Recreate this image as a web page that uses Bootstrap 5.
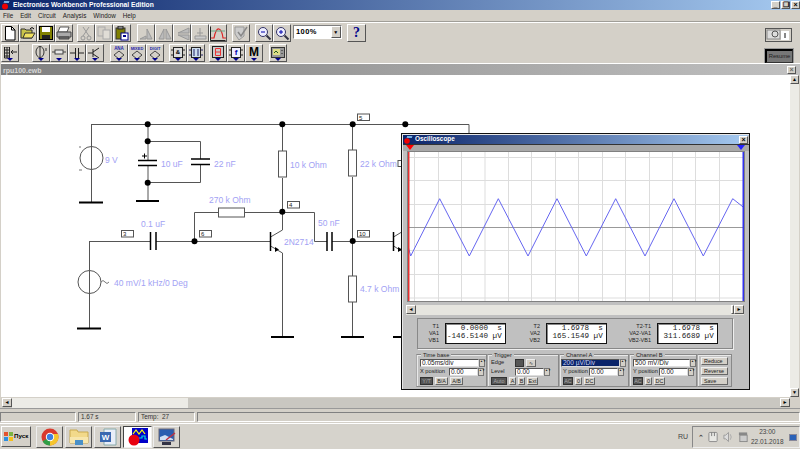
<!DOCTYPE html>
<html lang="ru">
<head>
  <meta charset="UTF-8" />
  <title>Electronics Workbench Professional Edition</title>
  <link rel="stylesheet" href="https://cdn.jsdelivr.net/npm/bootstrap@5.3.0/dist/css/bootstrap.min.css"/>
  <style>
    html, body { margin: 0; width: 800px; height: 449px; overflow: hidden; }
    body { background: #d4d0c8; color: #000; font: 8px/1 "Liberation Sans", Arial, sans-serif; }
    svg { display: block; }
    .app { width: 800px; height: 449px; }
    .bevel { background: #d4d0c8; border: 1px solid; border-color: #fff #555 #555 #fff; }
    .sunk { border: 1px solid; border-color: #808080 #fff #fff #808080; }

    .wintitle { height: 10px; flex: none; padding-left: 1px; color: #fff; font-size: 6.7px; font-weight: 700; background: linear-gradient(to right, #0a246a, #a6caf0); }
    .wintitle span { margin-left: 1px; }
    .winbtn { width: 9px; height: 8px; margin-left: 1px; font-size: 7px; line-height: 6px; text-align: center; color: #000; }
    .menubar { height: 12px; flex: none; padding: 1px 0 0 3px; gap: 7px; border-bottom: 1px solid #a09e98; box-shadow: 0 1px 0 #fff; font-size: 6.3px; color: #222; }
    .toolzone { height: 41px; flex: none; padding-top: 1px; }
    .tools { gap: 2px; padding-top: 1px; }
    .tb { height: 18px; padding-left: 1px; }
    .ic { width: 18px; height: 18px; flex: none; position: relative; display: flex; align-items: center; justify-content: center; }
    .ic.drop::after { content: ""; position: absolute; left: 5px; bottom: 0; border: 3px solid transparent; border-top: 3px solid #00008a; border-bottom: 0; }
    .sp2 { margin-left: 2px; } .sp4 { margin-left: 4px; } .sp5 { margin-left: 5px; } .sp6 { margin-left: 6px; } .sp13 { margin-left: 13px; }
    .zoomsel { width: 49px; height: 14px; margin-top: 1px; background: #fff; font-size: 7.5px; font-weight: 700; letter-spacing: .4px; padding-left: 2px; }
    .zoomsel b { margin-left: auto; width: 10px; height: 12px; display: flex; align-items: center; justify-content: center; font-size: 5px; }
    .help { width: 19px; color: #00008a; font: 700 14px "Liberation Serif", serif; }
    .memo { font-size: 12px; font-weight: 700; padding-bottom: 3px; }
    .simside { width: 35px; padding-top: 5px; gap: 7px; flex: none; }
    .sim1 { height: 14px; width: 27px; border: 1px solid #555; background: #d4d0c8; }
    .sim2 { height: 14px; width: 28px; border: 1px solid #333; outline: 1px solid #999; background: #777; font-size: 5.8px; color: #222; border-left: 2px solid #000; border-top: 2px solid #000; }

    .doc { flex: 1 1 auto; min-height: 0; margin: 0 0 0 1px; }
    .doctitle { height: 12px; flex: none; padding: 1px 4px 0 2px; color: #d8d8d8; font-size: 7px; font-weight: 700; background: linear-gradient(to right, #808080, #c0c0c0); border-top: 1px solid #fff; }
    .docclose { color: #666; }
    .docbody { flex: 1 1 auto; min-height: 0; }
    .canvas { background: #fff; width: 789px; height: 322px; flex: none; }
    .vscroll { width: 9px; background: #ecebe6; }
    .sbtn { width: 9px; height: 9px; flex: none; font-size: 5px; line-height: 7px; text-align: center; }
    .hscroll { height: 10px; width: 788px; margin-left: 1px; margin-top: 1px; flex: none; background: #c9c7c1; }
    .hthumb { width: 176px; background: #ecebe6; }
    .sbl { width: 10px; height: 9px; flex: none; font-size: 5px; line-height: 7px; text-align: center; }

    .statusbar { height: 15px; flex: none; padding: 3px 0 0 0; border-top: 1px solid #999; gap: 2px; font-size: 6.4px; color: #333; }
    .statusbar div { height: 10px; padding: 1px 0 0 2px; }
    .st1 { width: 76px; } .st2 { width: 58px; } .st3 { width: 57px; }
    .taskbar { height: 26px; flex: none; background: #d6d3cc; border-top: 1px solid #fff; }
    .startbtn { width: 30px; height: 21px; margin: 2px 0 0 1px; font-size: 6.2px; font-weight: 700; gap: 1px; padding-left: 2px; }
    .appbtn { width: 27px; height: 22px; margin-top: 2px; margin-left: 2px; border: 1px solid; border-color: #eee #555 #555 #eee; display: flex; align-items: center; justify-content: center; }
    .appbtn.first { margin-left: 5px; }
    .appbtn.last { margin-left: 1px; }
    .appbtn.on { width: 29px; background: #fff; border-color: #444 #eee #eee #444; }
    .tray { width: 108px; height: 22px; margin-top: 2px; border: 1px solid; border-color: #888 #eee #eee #888; color: #444; }
    .lang { margin: 0 4px 0 auto; font-size: 7px; color: #444; align-self: center; }
    .chev { margin: 0 4px 0 5px; font-size: 7px; font-weight: 700; }
    .clock { font-size: 6.5px; line-height: 10px; text-align: center; width: 40px; margin-left: auto; }
    .showdesk { width: 9px; height: 7px; background: #2a62b8; margin: 0 2px 0 3px; border: 1px solid #889; }

    .scope { position: absolute; left: 401px; top: 133px; width: 349px; height: 257px; background: #c0c0c0; border: 1px solid #111; box-shadow: inset 1px 1px 0 #e8e8e8; padding: 1px 0 0 1px; z-index: 5; }
    .scopetitle { height: 9px; margin-right: 1px; color: #fff; font-size: 6.4px; font-weight: 700; background: linear-gradient(to right, #0a246a, #a6caf0); padding-left: 1px; gap: 1px; }
    .scopetitle .winbtn { margin-left: auto; }
    .markers { height: 7px; padding: 0 4px 0 3px; background: #a8a8a8; border-top: 1px solid #333; }
    .plot { margin-left: 4px; width: 338px; height: 151px; background: #fff; border: 1px solid #808080; }
    .hbar { margin: 3px 5px 0 3px; height: 10px; background: #e6e5df; }
    .hbar .sbtn { height: 9px; width: 10px; }
    .hbar .thumb { width: 3px; margin-left: auto; height: 9px; }
    .readouts { width: 316px; height: 31px; margin: 3px 0 0 14px; display: grid; grid-template-columns: 27px 61px 40px 61px 50px 61px; align-items: center; border: 1px solid #888; box-shadow: 1px 1px 0 #eee; font-size: 5.5px; }
    .rlab { text-align: right; padding-right: 6px; line-height: 7px; color: #222; }
    .rval { height: 21px; background: #fff; border: 1px solid #111; box-shadow: inset 1px 1px 0 #888; font: 7.6px/7.5px "Liberation Mono", monospace; white-space: pre; padding: 1px 0 0 1px; color: #222; }
    .panels { margin: 5px 0 0 13px; width: 316px; height: 33px; font-size: 5.7px; color: #222; }
    .grp { position: relative; border: 1px solid #888; border-left-color: #aaa; box-shadow: inset 1px 1px 0 #e8e8e8; padding: 4px 0 0 3px; gap: 1px; flex: none; }
    .grp > em { position: absolute; left: 4px; top: -3px; padding: 0 2px; background: #c0c0c0; font-style: normal; line-height: 7px; }
    .g71 { width: 71px; } .g72 { width: 72px; } .g70 { width: 70px; } .g68 { width: 68px; }
    .gside { width: 35px; gap: 2px; padding-top: 2px; }
    .cr { height: 8px; gap: 2px; white-space: nowrap; }
    .fld { height: 8px; background: #fff; border: 1px solid; border-color: #555 #ddd #ddd #555; padding-left: 1px; line-height: 6px; font-size: 6.5px; }
    .fld.sel { background: #0a246a; color: #c8d0f0; margin-left: -2px; }
    .f59 { width: 59px; } .f58 { width: 58px; } .f29 { width: 29px; }
    .spin { width: 6px; height: 8px; background: #d4d0c8; border: 1px solid #777; margin-left: -2px; font-size: 3px; line-height: 3px; text-align: center; }
    .lb22 { width: 22px; } .lb26 { width: 24px; } .lb27 { width: 25px; margin-right: 2px; }
    .mb { height: 8px; padding: 0; min-width: 7px; background: #d4d0c8; border: 1px solid; border-color: #eee #666 #666 #eee; line-height: 6px; font-size: 5.4px; text-align: center; }
    .mb.dn { background: #555; color: #aaa; border-color: #333; }
    .m13 { width: 13px; } .m16 { width: 16px; } .m11 { width: 11px; } .m9 { width: 9px; } .m10 { width: 10px; }
    .sidebtn { width: 27px; height: 8px; font-size: 5.4px; line-height: 6px; padding-left: 2px; border: 1px solid; border-color: #eee #666 #666 #eee; background: #d4d0c8; }
  </style>
</head>
<body>
<div class="app d-flex flex-column position-relative">

  <div class="wintitle d-flex align-items-center">
    <svg width="11" height="10" viewBox="0 0 11 10"><path d="M3 3l1-2 1 2 1-2 1 2 1-2" fill="none" stroke="#8cf" stroke-width="1"/><circle cx="4" cy="6.5" r="3" fill="#e00"/></svg>
    <span>Electronics Workbench Professional Edition</span>
    <div class="winbtn bevel ms-auto">_</div><div class="winbtn bevel">❐</div><div class="winbtn bevel">×</div>
  </div>

  <div class="menubar d-flex align-items-center">
    <span>File</span><span>Edit</span><span>Circuit</span><span>Analysis</span><span>Window</span><span>Help</span>
  </div>

  <div class="toolzone d-flex">
    <div class="tools flex-grow-1 d-flex flex-column">
      <div class="tb d-flex">
        <div class="ic bevel"><svg width="14" height="15" viewBox="0 0 14 15"><path d="M2.500 .5h6l3.500 3.500v10h-9.500z" fill="#fff" stroke="#000"/><path d="M8.500 .5v3.500h3.500" fill="none" stroke="#000"/></svg></div>
        <div class="ic bevel"><svg width="16" height="14" viewBox="0 0 16 14"><path d="M1 3h4l1 1h6v8h-11z" fill="#c9c34a" stroke="#333"/><path d="M3 12l2-5h10l-3 5z" fill="#f0e060" stroke="#333"/><path d="M10 3q2-3 4 0" fill="none" stroke="#000"/></svg></div>
        <div class="ic bevel"><svg width="14" height="14" viewBox="0 0 14 14"><rect x=".5" y=".5" width="13" height="13" fill="#808000" stroke="#000"/><rect x="3" y="1" width="8" height="5" fill="#fff"/><rect x="3" y="9" width="8" height="4" fill="#222"/></svg></div>
        <div class="ic bevel"><svg width="16" height="14" viewBox="0 0 16 14"><path d="M4 1h9l-2 5h-9z" fill="#fff" stroke="#555"/><path d="M1 6h14v5h-14z" fill="#aaa" stroke="#444"/><path d="M3 11h10v2h-10z" fill="#777" stroke="#444"/></svg></div>
        <div class="ic bevel sp4"><svg width="12" height="15" viewBox="0 0 12 15"><path d="M3 1l6 9M9 1l-6 9" stroke="#999" fill="none"/><circle cx="3" cy="12" r="2" fill="none" stroke="#999"/><circle cx="9" cy="12" r="2" fill="none" stroke="#999"/></svg></div>
        <div class="ic bevel"><svg width="14" height="14" viewBox="0 0 14 14"><rect x="1" y="1" width="7" height="9" fill="#d4d0c8" stroke="#aaa"/><rect x="6" y="4" width="7" height="9" fill="#e0ddd6" stroke="#aaa"/></svg></div>
        <div class="ic bevel"><svg width="14" height="15" viewBox="0 0 14 15"><rect x="1" y="2" width="9" height="11" fill="#808000" stroke="#333"/><rect x="3" y="0" width="5" height="3" fill="#888" stroke="#222"/><rect x="6" y="7" width="7" height="7" fill="#fff" stroke="#00008a"/><rect x="8" y="9" width="3" height="2" fill="#00008a"/></svg></div>
        <div class="ic bevel sp6"><svg width="15" height="13" viewBox="0 0 15 13"><path d="M1 12l6-3v3zM8 12v-10l5 10z" fill="#bbb" stroke="#999"/></svg></div>
        <div class="ic bevel"><svg width="15" height="13" viewBox="0 0 15 13"><path d="M7 12v-10l-5 10zM9 12v-10l5 10z" fill="#bbb" stroke="#999"/></svg></div>
        <div class="ic bevel"><svg width="15" height="13" viewBox="0 0 15 13"><path d="M14 1v5l-11 0zM14 8v5l-11-5z" fill="#bbb" stroke="#999"/></svg></div>
        <div class="ic bevel"><svg width="15" height="13" viewBox="0 0 15 13"><path d="M2 9h11v3h-11zM7 1v8M4 6h6" fill="#ccc" stroke="#999"/></svg></div>
        <div class="ic bevel"><svg width="16" height="15" viewBox="0 0 16 15"><path d="M.5 .5v14h15" fill="none" stroke="#222"/><path d="M1 12h3q2-10 5-9t4 9h3" fill="none" stroke="#d22" stroke-width="1.200"/><path d="M1 5h14" stroke="#6a8"/></svg></div>
        <div class="ic bevel sp5"><svg width="15" height="15" viewBox="0 0 15 15"><path d="M1 1h9v9l-5 4-4-6z" fill="#ccc" stroke="#999"/><path d="M4 6l3 4 6-9" fill="none" stroke="#888" stroke-width="1.500"/></svg></div>
        <div class="ic bevel sp5"><svg width="15" height="15" viewBox="0 0 15 15"><circle cx="6" cy="6" r="4.500" fill="#eef" stroke="#336"/><path d="M4 6h4" stroke="#00a"/><path d="M9.500 9.500l4 4" stroke="#334" stroke-width="2"/></svg></div>
        <div class="ic bevel"><svg width="15" height="15" viewBox="0 0 15 15"><circle cx="6" cy="6" r="4.500" fill="#eef" stroke="#336"/><path d="M4 6h4M6 4v4" stroke="#00a"/><path d="M9.500 9.500l4 4" stroke="#334" stroke-width="2"/></svg></div>
        <div class="zoomsel sunk sp2 d-flex align-items-center">100%<b class="bevel">▼</b></div>
        <div class="ic bevel sp5 help">?</div>
      </div>
      <div class="tb d-flex">
        <div class="ic bevel drop"><svg width="15" height="13" viewBox="0 0 15 13"><path d="M1.500 0v11h5v-11zM1.500 3h5M1.500 6h5M1.500 9h5M4 0v11" fill="none" stroke="#222"/><path d="M14 5h-6M10 3l-2 2 2 2" fill="none" stroke="#222"/></svg></div>
        <div class="ic bevel drop sp13"><svg width="14" height="14" viewBox="0 0 14 14"><ellipse cx="6" cy="6" rx="4" ry="5.500" fill="none" stroke="#333"/><path d="M6 0v13M12 2v1M11 4h2" stroke="#333"/></svg></div>
        <div class="ic bevel drop"><svg width="14" height="12" viewBox="0 0 14 12"><rect x="3" y="3" width="8" height="4" fill="#e8e8e8" stroke="#444"/><path d="M0 5h3M11 5h3" stroke="#444"/></svg></div>
        <div class="ic bevel drop"><svg width="14" height="12" viewBox="0 0 14 12"><path d="M0 6h5M9 6h5M5.500 1v10M8.500 1v10" stroke="#222"/></svg></div>
        <div class="ic bevel drop"><svg width="14" height="12" viewBox="0 0 14 12"><path d="M5 2v8M0 6h5M5 5l6-4M5 7l6 4" stroke="#222" fill="none"/></svg></div>
        <div class="ic bevel drop sp6"><svg width="16" height="15" viewBox="0 0 16 15"><path d="M8 5l5 4-5 4-5-4z" fill="none" stroke="#444"/><text x="8" y="4" text-anchor="middle" font-size="4.500" font-weight="700" fill="#22a">ANA</text></svg></div>
        <div class="ic bevel drop"><svg width="16" height="15" viewBox="0 0 16 15"><path d="M8 5l5 4-5 4-5-4z" fill="none" stroke="#444"/><text x="8" y="4" text-anchor="middle" font-size="4" font-weight="700" fill="#22a">MIXED</text></svg></div>
        <div class="ic bevel drop"><svg width="16" height="15" viewBox="0 0 16 15"><path d="M8 5l5 4-5 4-5-4z" fill="none" stroke="#444"/><text x="8" y="4" text-anchor="middle" font-size="4" font-weight="700" fill="#22a">DIGIT</text></svg></div>
        <div class="ic bevel drop sp5"><svg width="14" height="13" viewBox="0 0 14 13"><rect x="2.500" y=".5" width="9" height="10" fill="#ddd" stroke="#222"/><path d="M0 3h2M0 8h2M12 3h2M12 8h2" stroke="#222"/><text x="7" y="7" text-anchor="middle" font-size="6" font-weight="700">&amp;</text></svg></div>
        <div class="ic bevel drop"><svg width="14" height="13" viewBox="0 0 14 13"><rect x="2.500" y=".5" width="9" height="10" fill="#cde" stroke="#222"/><path d="M0 3h2M0 8h2M12 3h2M12 8h2M5 2v7M9 2v7" stroke="#226"/></svg></div>
        <div class="ic bevel drop sp4"><svg width="12" height="14" viewBox="0 0 12 14"><rect x=".5" y=".5" width="11" height="11" fill="#ccc" stroke="#222"/><path d="M3.500 2.500h5v7h-5zM3.500 6h5" fill="none" stroke="#e33"/></svg></div>
        <div class="ic bevel drop"><svg width="14" height="13" viewBox="0 0 14 13"><rect x="2.500" y=".5" width="9" height="10" fill="#eef" stroke="#222"/><path d="M0 3h2M0 8h2M12 3h2M12 8h2" stroke="#222"/><text x="7" y="8" text-anchor="middle" font-size="8" font-weight="700" fill="#00a">f</text></svg></div>
        <div class="ic bevel drop memo">M</div>
        <div class="ic bevel drop sp6"><svg width="14" height="12" viewBox="0 0 14 12"><rect x=".5" y=".5" width="13" height="10" fill="#999" stroke="#333"/><rect x="2" y="2" width="7" height="6" fill="#dd8"/><path d="M3 6l2-2 2 2" stroke="#252" fill="none"/><path d="M11 3v1M11 6v1" stroke="#222"/></svg></div>
      </div>
    </div>
    <div class="simside d-flex flex-column align-items-start">
      <div class="sim1 d-flex align-items-center"><svg width="25" height="12" viewBox="0 0 25 12"><rect x="1" y="1" width="13" height="9" fill="#ddd" stroke="#888"/><circle cx="9" cy="5" r="3" fill="none" stroke="#555"/><rect x="15" y="2" width="8" height="9" fill="#fff"/><path d="M19 4v5" stroke="#111"/></svg></div>
      <div class="sim2 d-flex align-items-center justify-content-center">Resume</div>
    </div>
  </div>

  <div class="doc d-flex flex-column">
    <div class="doctitle d-flex align-items-center">rpu100.ewb<div class="winbtn bevel docclose ms-auto">×</div></div>
    <div class="docbody d-flex">
      <div class="canvas">
        <svg width="789" height="322" viewBox="0 76 789 322" font-family="Liberation Sans, Arial, sans-serif" font-size="8.500">
          <g fill="none" stroke="#555">
            <path d="M90 125.500H468V134M90.500 125V203M147 125V161M147 167V202M147 142.500H199.500V160M199.500 165V183.500H147"/>
            <circle cx="90.500" cy="159" r="11.500"/>
            <path d="M88.500 242.500H149M155 242.500H269.500M88.500 242V329M193.500 242V213.500H217M244 213.500H313.500V242.500H326M331 242.500H392"/>
            <circle cx="88.500" cy="283" r="11.500"/>
            <path d="M281.500 125V152M281.500 179V231L269.500 238M269.500 247L281.500 254V338M351.500 125V151M351.500 178V277M351.500 303V338M392.500 238L404 231M392.500 247L404 254"/>
            <rect x="217.500" y="209" width="26" height="9" fill="#fff"/>
            <rect x="277.500" y="152" width="8" height="26" fill="#fff"/>
            <rect x="347.500" y="151" width="8" height="26" fill="#fff"/>
            <rect x="347.500" y="277" width="8" height="26" fill="#fff"/>
            <path d="M100 283q2-3 4 0t4 0" stroke="#777"/>
          </g>
          <g fill="none" stroke="#000">
            <path stroke-width="2" d="M78 203.500H102M135 202H158M76 329.500H100M270 338H293M340 338H363M392 338H401"/>
            <path stroke-width="1.500" d="M137 161.500H156M137 166.500H156M190 160H209M190 165.500H209M149.500 233V251M155 233V251M326 233V252M331 233V252M269.500 233V252M392.500 233V252"/>
            <path d="M141 157H146M143.500 154.500V159.500" stroke-width="1"/>
            <path d="M78 148H80M78 171H81" stroke-width="1" stroke="#777"/>
          </g>
          <g fill="#000">
            <circle cx="146.700" cy="125.300" r="3"/><circle cx="146.700" cy="142.300" r="3"/><circle cx="146.700" cy="183.700" r="3"/>
            <circle cx="281.300" cy="125.300" r="3"/><circle cx="351.700" cy="125.300" r="3"/><circle cx="404.300" cy="125.300" r="3"/>
            <circle cx="193.500" cy="242.300" r="3"/><circle cx="281.300" cy="212.800" r="3"/><circle cx="351.700" cy="242" r="3"/>
            <path d="M274 248l4 2.500-4 2.500zM397 248l4 2.500-4 2.500z"/>
          </g>
          <g fill="#a2a2f4">
            <text x="104" y="164">9 V</text>
            <text x="160" y="168">10 uF</text>
            <text x="213" y="168">22 nF</text>
            <text x="208" y="204">270 k Ohm</text>
            <text x="140" y="228">0.1 uF</text>
            <text x="113" y="287">40 mV/1 kHz/0 Deg</text>
            <text x="283" y="246">2N2714</text>
            <text x="289" y="169">10 k Ohm</text>
            <text x="359" y="168">22 k Ohm</text>
            <text x="317" y="227">50 nF</text>
            <text x="359" y="293">4.7 k Ohm</text>
          </g>
          <g fill="#fff" stroke="#555">
            <rect x="120.500" y="231.500" width="12" height="6.500"/><rect x="198.500" y="231.500" width="12" height="6.500"/>
            <rect x="286.500" y="202.500" width="12" height="6.500"/><rect x="356.500" y="115" width="12" height="6.500"/>
            <rect x="356.500" y="231.500" width="12" height="6.500"/><rect x="397" y="161.500" width="8" height="6"/>
          </g>
          <g font-size="6" fill="#222">
            <text x="122" y="237">3</text><text x="200" y="237">6</text><text x="288" y="208">4</text><text x="358" y="120.500">5</text><text x="358" y="237">10</text>
          </g>
        </svg>
      </div>
      <div class="vscroll d-flex flex-column justify-content-between">
        <div class="sbtn bevel">▲</div><div class="sbtn bevel">▼</div>
      </div>
    </div>
    <div class="hscroll d-flex">
      <div class="sbl bevel">◄</div>
      <div class="hthumb"></div>
      <div class="sbl bevel ms-auto">►</div>
    </div>
  </div>

  <div class="statusbar d-flex">
    <div class="sunk st1"></div>
    <div class="sunk st2">1.67 s</div>
    <div class="sunk st3">Temp:&nbsp; 27</div>
    <div class="sunk flex-grow-1"></div>
  </div>

  <div class="taskbar d-flex">
    <div class="startbtn bevel d-flex align-items-center">
      <svg width="9" height="9" viewBox="0 0 9 9"><rect width="4" height="4" fill="#e5532d"/><rect x="5" width="4" height="4" fill="#7cb342"/><rect y="5" width="4" height="4" fill="#2f8fe0"/><rect x="5" y="5" width="4" height="4" fill="#f6c018"/></svg>Пуск
    </div>
    <div class="appbtn first"><svg width="18" height="18" viewBox="0 0 18 18"><circle cx="9" cy="9" r="8.500" fill="#d93a2e"/><path d="M9 9L1.600 13.200A8.500 8.500 0 0 0 9 17.500z" fill="#2f9e46"/><path d="M9 9V17.500A8.500 8.500 0 0 0 17 6H9z" fill="#f5c52c"/><circle cx="9" cy="9" r="4.200" fill="#fff"/><circle cx="9" cy="9" r="3.200" fill="#3d7fe0"/></svg></div>
    <div class="appbtn"><svg width="20" height="18" viewBox="0 0 20 18"><path d="M1 2h7l1 2h10v11h-18z" fill="#f2d98a" stroke="#c9a94e"/><path d="M1 9h18v6h-18z" fill="#f7e6ad"/><rect x="6" y="12" width="8" height="5" fill="#4a90c8"/></svg></div>
    <div class="appbtn"><svg width="18" height="18" viewBox="0 0 18 18"><path d="M5 1h12v16h-12z" fill="#e8eef8" stroke="#8aa"/><path d="M1 4h11v10h-11z" fill="#3a68b0"/><text x="6.500" y="12" text-anchor="middle" font-size="8" font-weight="700" fill="#fff">W</text></svg></div>
    <div class="appbtn on"><svg width="20" height="20" viewBox="0 0 20 20"><rect x="4" y="1" width="16" height="15" fill="#0000c8"/><path d="M5 7l3-4 3 4 3-4 3 4" fill="none" stroke="#ff0" stroke-width="1.200"/><path d="M11 11h3v-2h3v3h2" fill="none" stroke="#0dd" stroke-width="1.200"/><circle cx="6" cy="13" r="5.500" fill="#e80010"/></svg></div>
    <div class="appbtn last"><svg width="18" height="18" viewBox="0 0 18 18"><rect x="1" y="1" width="15" height="12" fill="#2a5db0" stroke="#667"/><path d="M2 9l5-2 8 4v1h-13z" fill="#cfe0f5"/><path d="M8 12l9-7" stroke="#c03040" stroke-width="1.500"/><rect x="4" y="14" width="9" height="3" fill="#334"/></svg></div>
    <div class="lang">RU</div>
    <div class="tray d-flex align-items-center">
      <span class="chev">⌃</span>
      <svg width="12" height="12" viewBox="0 0 12 12" class="me-1"><rect x="1" y="1" width="9" height="10" rx="1" fill="#e8e8e4" stroke="#888"/><path d="M4 1v4M7 1v4" stroke="#777"/></svg>
      <svg width="12" height="12" viewBox="0 0 12 12" class="me-1"><path d="M1 4h2l3-3v10l-3-3h-2z" fill="#ddd" stroke="#999"/><path d="M8 3q2 3 0 6" fill="none" stroke="#aaa"/></svg>
      <svg width="12" height="12" viewBox="0 0 12 12"><rect x="1" y="1" width="9" height="3" fill="#888"/><rect x="2" y="4" width="8" height="7" fill="#ccc" stroke="#888"/></svg>
      <div class="clock">23:00<br>22.01.2018</div>
      <div class="showdesk"></div>
    </div>
  </div>

  <div class="scope d-flex flex-column">
    <div class="scopetitle d-flex align-items-center">
      <svg width="10" height="9" viewBox="0 0 10 9"><path d="M3 3l1-2 1 2 1-2 1 2 1-2" fill="none" stroke="#8cf"/><circle cx="3" cy="6" r="2.800" fill="#e00"/></svg>
      Oscilloscope
      <div class="winbtn bevel">×</div>
    </div>
    <div class="markers d-flex justify-content-between">
      <svg width="8" height="6" viewBox="0 0 8 6"><path d="M0 0h8l-4 5z" fill="#f00"/></svg>
      <svg width="8" height="6" viewBox="0 0 8 6"><path d="M0 0h8l-4 5z" fill="#22f"/></svg>
    </div>
    <div class="plot">
      <svg width="336" height="149" viewBox="407 151 336 149" fill="none">
        <g stroke="#ddd">
          <path d="M413.500 151V300M437.500 151V300M460.500 151V300M484 151V300M507.500 151V300M530.500 151V300M554.500 151V300M577.500 151V300M601.500 151V300M624.500 151V300M648.500 151V300M671.500 151V300M694.500 151V300M718.500 151V300"/>
          <path d="M407 156.500H743M407 179.500H743M407 203.500H743M407 249.500H743M407 273.500H743M407 297H743"/>
        </g>
        <path d="M407 226.500H743" stroke="#999"/>
        <path d="M407 245L409.700 255 438.700 197.700 468.300 255 497.300 197.700 527 255 556 197.700 585.300 255 614.700 197.700 644 255 673 197.700 702.300 255 731.700 197.700 743 206.700" stroke="#6666f0"/>
        <path d="M407.500 151V300" stroke="#e43030" stroke-width="2"/>
        <path d="M742.500 151V300" stroke="#3030f0" stroke-width="2"/>
      </svg>
    </div>
    <div class="hbar d-flex">
      <div class="sbtn bevel">◄</div>
      <div class="thumb bevel"></div>
      <div class="sbtn bevel">►</div>
    </div>
    <div class="readouts">
      <div class="rlab">T1<br>VA1<br>VB1</div><div class="rval">   0.0000  s
-146.5140 µV</div>
      <div class="rlab">T2<br>VA2<br>VB2</div><div class="rval">   1.6978  s
 165.1549 µV</div>
      <div class="rlab">T2-T1<br>VA2-VA1<br>VB2-VB1</div><div class="rval">   1.6978  s
 311.6689 µV</div>
    </div>
    <div class="panels d-flex">
      <div class="grp g71 d-flex flex-column"><em>Time base</em>
        <div class="cr d-flex"><div class="fld f59">0.05ms/div</div><div class="spin">▲▼</div></div>
        <div class="cr d-flex align-items-center"><span class="lb27">X position</span><div class="fld f29">0.00</div><div class="spin">▲▼</div></div>
        <div class="cr d-flex"><div class="mb dn m13">Y/T</div><div class="mb m13">B/A</div><div class="mb m13">A/B</div></div>
      </div>
      <div class="grp g72 d-flex flex-column"><em>Trigger</em>
        <div class="cr d-flex align-items-center"><span class="lb22">Edge</span><div class="mb dn m9"></div><div class="mb m10">∿</div></div>
        <div class="cr d-flex align-items-center"><span class="lb22">Level</span><div class="fld f29">0.00</div><div class="spin">▲▼</div></div>
        <div class="cr d-flex"><div class="mb dn m16">Auto</div><div class="mb">A</div><div class="mb">B</div><div class="mb m11">Ext</div></div>
      </div>
      <div class="grp g70 d-flex flex-column"><em>Channel A</em>
        <div class="cr d-flex"><div class="fld sel f59">200 µV/Div</div><div class="spin">▲▼</div></div>
        <div class="cr d-flex align-items-center"><span class="lb26">Y position</span><div class="fld f29">0.00</div><div class="spin">▲▼</div></div>
        <div class="cr d-flex"><div class="mb dn m10">AC</div><div class="mb">0</div><div class="mb m11">DC</div></div>
      </div>
      <div class="grp g68 d-flex flex-column"><em>Channel B</em>
        <div class="cr d-flex"><div class="fld f58">500 mV/Div</div><div class="spin">▲▼</div></div>
        <div class="cr d-flex align-items-center"><span class="lb26">Y position</span><div class="fld f29">0.00</div><div class="spin">▲▼</div></div>
        <div class="cr d-flex"><div class="mb dn m10">AC</div><div class="mb">0</div><div class="mb m11">DC</div></div>
      </div>
      <div class="grp gside d-flex flex-column">
        <div class="sidebtn">Reduce</div><div class="sidebtn">Reverse</div><div class="sidebtn">Save</div>
      </div>
    </div>
  </div>

</div>
<script src="https://cdn.jsdelivr.net/npm/bootstrap@5.3.0/dist/js/bootstrap.bundle.min.js"></script>
</body>
</html>
